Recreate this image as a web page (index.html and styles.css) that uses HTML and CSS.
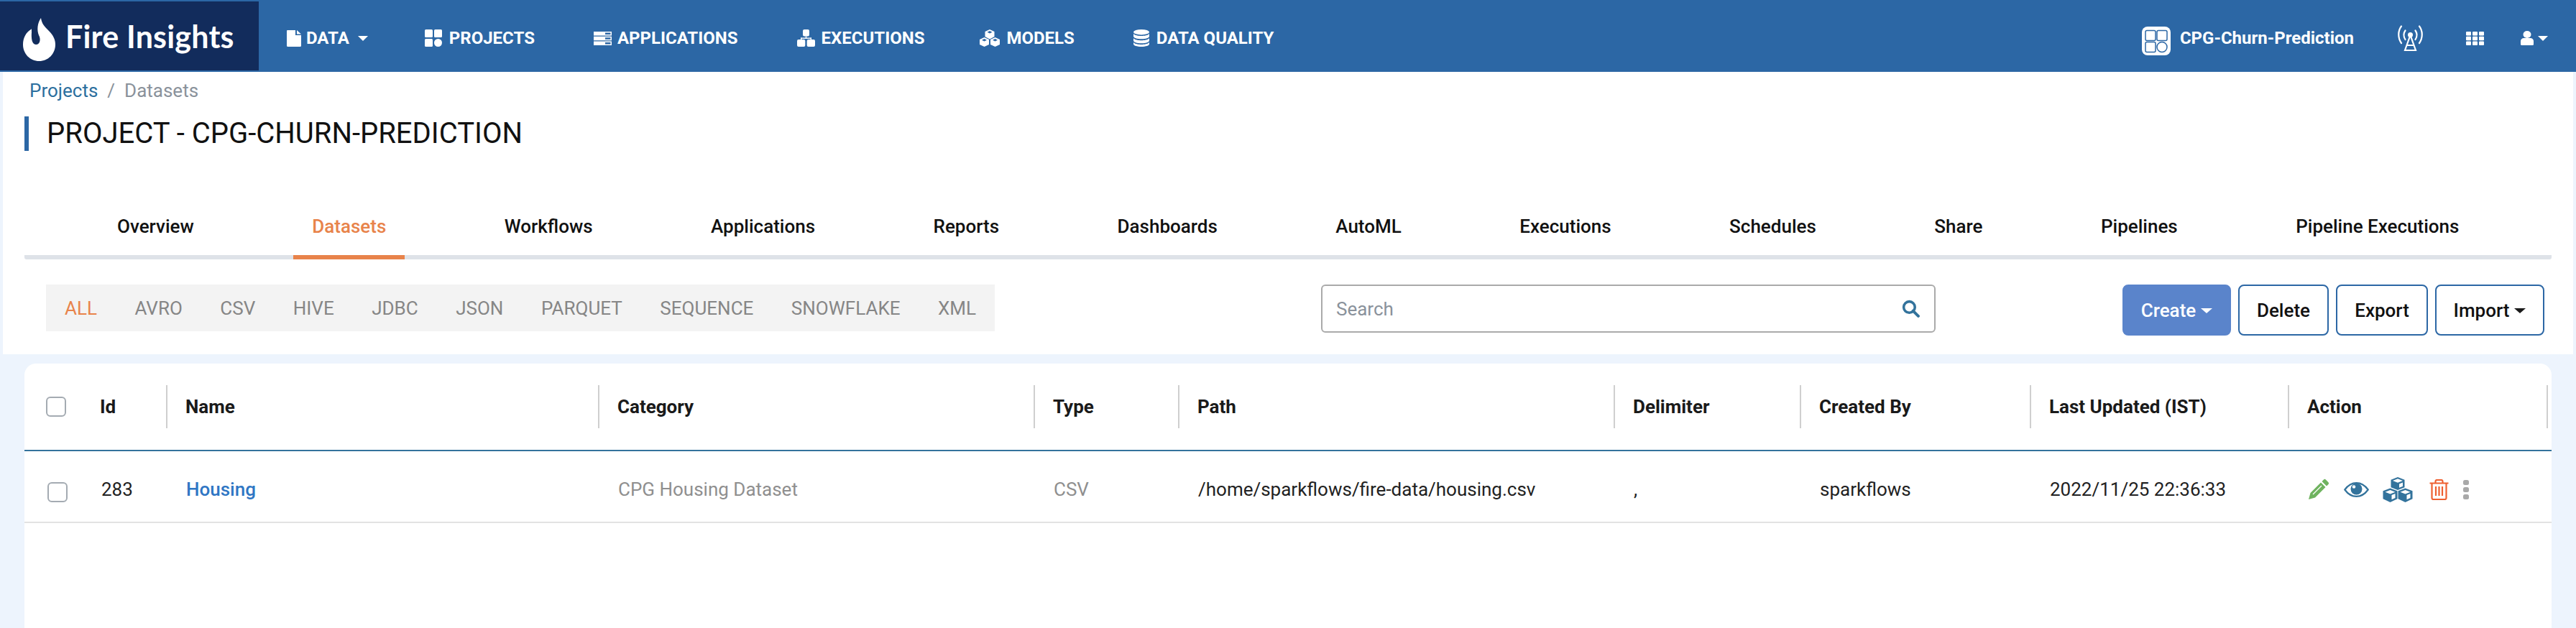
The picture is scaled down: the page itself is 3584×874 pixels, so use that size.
FILE: index.html
```html
<!DOCTYPE html>
<html lang="en">
<head>
<meta charset="utf-8">
<title>Fire Insights - Datasets</title>
<link rel="stylesheet" href="styles.css">
</head>
<body>
<header class="topbar">
  <a class="brand">
    <svg class="brand-flame" viewBox="0 0 45 60"><path fill="#fff" d="M25 0C26 8 30 12 36 18C42 24 45 30 45 37C45 50 35 60 22.500 60C10 60 0 50 0 37C0 28 4 20 11 16C12 14 12 16 12 20C11.500 27 12 37 18 37C24 37 25 29 22 24C19 17 20 7 25 0Z"/></svg>
    <span class="brand-text">Fire Insights</span>
  </a>
  <nav class="mainnav">
    <a class="navitem nav-data"><svg class="navicon ni-data" viewBox="0 0 20 23"><path fill="#fff" d="M1 0h11v7h8v14.500a1.500 1.500 0 0 1-1.500 1.500h-17A1.500 1.500 0 0 1 0 21.500V1a1 1 0 0 1 1-1zM14 0l6 5.500h-6z"/></svg>DATA<span class="caret caret-nav"></span></a>
    <a class="navitem nav-projects"><svg class="navicon ni-projects" viewBox="0 0 24 24"><g fill="#fff"><rect width="11" height="11" rx="1.500"/><rect x="13" width="11" height="11" rx="1.500"/><rect y="13" width="11" height="11" rx="1.500"/><circle cx="18.500" cy="18.500" r="5.500"/></g></svg>PROJECTS</a>
    <a class="navitem nav-apps"><svg class="navicon ni-apps" viewBox="0 0 25 19"><g fill="none" stroke="#fff" stroke-width="1.500"><rect x=".75" y=".75" width="23.500" height="4"/><rect x=".75" y="7.500" width="23.500" height="4"/><rect x=".75" y="14.250" width="23.500" height="4"/></g><g fill="#fff"><rect x="1" y="1" width="15" height="3.500"/><rect x="1" y="7.750" width="15" height="3.500"/><rect x="1" y="14.500" width="15" height="3.500"/></g></svg>APPLICATIONS</a>
    <a class="navitem nav-exec"><svg class="navicon ni-exec" viewBox="0 0 25 24"><g fill="#fff"><rect x="8" width="9" height="9.500" rx="2"/><rect x="11.800" y="9.500" width="1.400" height="3"/><rect x="5" y="11.500" width="15" height="1.400"/><rect x="5" y="11.500" width="1.400" height="3"/><rect x="18.600" y="11.500" width="1.400" height="3"/><rect y="14" width="11.300" height="10" rx="2"/><rect x="13.700" y="14" width="11.300" height="10" rx="2"/></g></svg>EXECUTIONS</a>
    <a class="navitem nav-models"><svg class="navicon ni-models" viewBox="0 0 30 24"><g fill="#fff"><path d="M15 0l6.500 3v7L15 13.500 8.500 10V3z"/><path d="M7.500 11l6.500 3v7l-6.500 3L1 21v-7z"/><path d="M22.500 11l6.500 3v7l-6.500 3L16 21v-7z"/></g><g fill="#2c67a5"><path d="M15 2l3.500 1.700L15 5.400l-3.500-1.700zM7.500 13l3.500 1.700-3.500 1.700L4 14.700zM22.500 13l3.500 1.700-3.500 1.700-3.500-1.700z"/></g></svg>MODELS</a>
    <a class="navitem nav-dq"><svg class="navicon ni-dq" viewBox="0 0 22 24"><g fill="#fff"><ellipse cx="11" cy="3.700" rx="11" ry="3.700"/><path d="M0 6c2 2.300 7 3 11 3s9-.7 11-3v3.500c0 2.200-5 3.800-11 3.800S0 11.700 0 9.500z"/><path d="M0 12.200c2 2.300 7 3 11 3s9-.7 11-3v3.300c0 2.200-5 3.800-11 3.800S0 17.700 0 15.500z"/><path d="M0 18c2 2.300 7 3 11 3s9-.7 11-3v2.300c0 2.200-5 3.700-11 3.700S0 22.500 0 20.300z"/></g></svg>DATA QUALITY</a>
  </nav>
  <div class="nav-right">
    <a class="project-chip">
      <svg class="chip-icon" viewBox="0 0 40 40"><rect width="40" height="40" rx="8" fill="#fff"/><g fill="none" stroke="#2c67a5" stroke-width="1.500"><rect x="5" y="5.500" width="14" height="14" rx="2"/><rect x="21" y="5.500" width="14" height="14" rx="2"/><rect x="5" y="21.500" width="14" height="14" rx="2"/><ellipse cx="28" cy="28.500" rx="7" ry="7"/></g></svg>
      <span>CPG-Churn-Prediction</span>
    </a>
    <svg class="antenna" viewBox="0 0 35 36"><g fill="none" stroke="#fff" stroke-width="2.200" stroke-linecap="round"><path d="M5 1.500C0 8 0 18 5 25M30 1.500C35 8 35 18 30 25"/><path d="M10.500 7.500C8 11 8 16 10.500 20M24.500 7.500C27 11 27 16 24.500 20"/><path d="M17.500 14L10 35h15zM13 28h9"/></g><circle cx="17.500" cy="13.500" r="3.500" fill="#fff"/></svg>
    <svg class="grid-icon" viewBox="0 0 25 19"><g fill="#fff"><rect width="7" height="5.500" rx="1"/><rect x="9" width="7" height="5.500" rx="1"/><rect x="18" width="7" height="5.500" rx="1"/><rect y="6.700" width="7" height="5.500" rx="1"/><rect x="9" y="6.700" width="7" height="5.500" rx="1"/><rect x="18" y="6.700" width="7" height="5.500" rx="1"/><rect y="13.500" width="7" height="5.500" rx="1"/><rect x="9" y="13.500" width="7" height="5.500" rx="1"/><rect x="18" y="13.500" width="7" height="5.500" rx="1"/></g></svg>
    <a class="user-menu"><svg class="user-icon" viewBox="0 0 18 20"><g fill="#fff"><ellipse cx="9" cy="5" rx="5.500" ry="5"/><path d="M0 14c0-2 2-4 4.500-4h9c2.500 0 4.500 2 4.500 4v4.500a1.500 1.500 0 0 1-1.500 1.500h-15A1.500 1.500 0 0 1 0 18.500z"/></g></svg><span class="caret caret-user"></span></a>
  </div>
</header>

<main class="page">
  <section class="panel">
    <div class="breadcrumb"><a class="crumb-link">Projects</a><span class="crumb-sep">/</span><span class="crumb-cur">Datasets</span></div>
    <h1 class="page-title">PROJECT - CPG-CHURN-PREDICTION</h1>
    <div class="tabs">
      <a class="tab">Overview</a>
      <a class="tab active">Datasets</a>
      <a class="tab">Workflows</a>
      <a class="tab">Applications</a>
      <a class="tab">Reports</a>
      <a class="tab">Dashboards</a>
      <a class="tab">AutoML</a>
      <a class="tab">Executions</a>
      <a class="tab">Schedules</a>
      <a class="tab">Share</a>
      <a class="tab">Pipelines</a>
      <a class="tab">Pipeline Executions</a>
    </div>
    <div class="toolbar">
      <div class="filters">
        <a class="filter active">ALL</a>
        <a class="filter">AVRO</a>
        <a class="filter">CSV</a>
        <a class="filter">HIVE</a>
        <a class="filter">JDBC</a>
        <a class="filter">JSON</a>
        <a class="filter">PARQUET</a>
        <a class="filter">SEQUENCE</a>
        <a class="filter">SNOWFLAKE</a>
        <a class="filter">XML</a>
      </div>
      <div class="search">
        <span class="search-ph">Search</span>
        <svg class="search-icon" viewBox="0 0 24 24"><circle cx="10" cy="10" r="7.500" fill="none" stroke="#33739c" stroke-width="3.400"/><path d="M15 15l7 7" stroke="#33739c" stroke-width="3.800" stroke-linecap="round"/></svg>
      </div>
      <div class="actions">
        <button class="btn btn-primary">Create<span class="caret"></span></button>
        <button class="btn btn-delete">Delete</button>
        <button class="btn btn-export">Export</button>
        <button class="btn btn-import">Import<span class="caret caret-dark"></span></button>
      </div>
    </div>
  </section>

  <section class="card">
    <div class="row row-head">
      <div class="cell c-check"><span class="checkbox"></span></div>
      <div class="cell c-id">Id</div>
      <div class="cell c-name">Name</div>
      <div class="cell c-cat">Category</div>
      <div class="cell c-type">Type</div>
      <div class="cell c-path">Path</div>
      <div class="cell c-delim">Delimiter</div>
      <div class="cell c-by">Created By</div>
      <div class="cell c-upd">Last Updated (IST)</div>
      <div class="cell c-act">Action</div>
    </div>
    <div class="row row-body">
      <div class="cell c-check"><span class="checkbox"></span></div>
      <div class="cell c-id">283</div>
      <div class="cell c-name"><a class="link">Housing</a></div>
      <div class="cell c-cat muted">CPG Housing Dataset</div>
      <div class="cell c-type muted">CSV</div>
      <div class="cell c-path">/home/sparkflows/fire-data/housing.csv</div>
      <div class="cell c-delim">,</div>
      <div class="cell c-by">sparkflows</div>
      <div class="cell c-upd">2022/11/25 22:36:33</div>
      <div class="cell c-act icons">
        <svg class="ic ic-pencil" viewBox="0 0 30 30"><path fill="#6fb35f" d="M22 1.500a2 2 0 0 1 2.800 0l3.700 3.700a2 2 0 0 1 0 2.800L26 10.500 19.500 4zM18 5.500L24.500 12 10 26.500 1 29l2.500-9z"/><path stroke="#fff" stroke-width="1.200" d="M19 10L7 22"/></svg>
        <svg class="ic ic-eye" viewBox="0 0 35 21"><path fill="none" stroke="#33739c" stroke-width="2.200" d="M1.300 10.500C6 4 11 1.100 17.500 1.100S29 4 33.700 10.500C29 17 24 19.900 17.500 19.900S6 17 1.300 10.500z"/><circle cx="17.500" cy="9.500" r="8" fill="#33739c"/><circle cx="14" cy="6.500" r="2.300" fill="#fff"/></svg>
        <svg class="ic ic-cubes" viewBox="0 0 42 35"><g fill="#33739c"><path d="M21 0l9.500 3.700v10.600L21 18l-9.500-3.700V3.700z"/><path d="M10.500 15.500l10 3.700v11l-10 4.800-10-4.800v-11z"/><path d="M31.500 15.500l10 3.700v11l-10 4.800-10-4.800v-11z"/></g><g fill="#fff"><path d="M21 2.200l7 2.800-7 2.800-7-2.800z"/><path d="M10.500 18l7 2.800-7 2.800-7-2.800z"/><path d="M31.500 18l7 2.800-7 2.800-7-2.800z"/><path d="M23 9.500l5-2v5.200l-5 2z"/><path d="M12.500 25l5-2v6l-5 2.300z"/><path d="M33.500 25l5-2v6l-5 2.300z"/></g></svg>
        <svg class="ic ic-trash" viewBox="0 0 27 29"><g fill="none" stroke="#ee6031" stroke-width="2.200"><path d="M.5 5.500h26M8.500 5.500V3a2 2 0 0 1 2-2h6a2 2 0 0 1 2 2v2.500"/><path d="M3.500 5.500v20.500a2 2 0 0 0 2 2h16a2 2 0 0 0 2-2V5.500"/><path d="M9 10v13M13.500 10v13M18 10v13"/></g></svg>
        <svg class="ic ic-dots" viewBox="0 0 8 27"><g fill="#a9a9a9"><rect width="8" height="7" rx="2.500"/><rect y="10" width="8" height="7" rx="2.500"/><rect y="20" width="8" height="7" rx="2.500"/></g></svg>
      </div>
    </div>
  </section>
</main>
</body>
</html>
```
FILE: styles.css
```css
* { box-sizing: border-box; }
html, body { margin: 0; padding: 0; }
body {
  width: 3584px;
  height: 874px;
  overflow: hidden;
  background: #edf4fd;
  font-family: Roboto, "Liberation Sans", sans-serif;
  color: #1a1a1a;
}
a { color: inherit; text-decoration: none; }

/* Top bar */
.topbar {
  height: 100px;
  background: #2c67a5;
  display: flex;
  align-items: center;
}
.brand {
  width: 360px;
  height: 96px;
  background: #122c5c;
  display: flex;
  align-items: center;
  padding-left: 32px;
  gap: 14px;
  flex: none;
}
.brand-flame { width: 45px; height: 60px; flex: none; margin-top: 10px; }
.brand-text {
  font-family: Lato, "Open Sans", sans-serif;
  font-weight: 700;
  font-size: 43px;
  letter-spacing: 0.2px;
  color: #fff;
}
.mainnav {
  display: flex;
  align-items: center;
  padding-top: 6px;
  color: #fff;
  font-weight: 700;
  font-size: 24px;
}
.navitem { display: flex; align-items: center; flex: none; }
.navicon { flex: none; }
.ni-data { width: 20px; height: 23px; margin-right: 7px; }
.ni-projects { width: 24px; height: 24px; margin-right: 10px; }
.ni-apps { width: 25px; height: 19px; margin-right: 8px; }
.ni-exec { width: 25px; height: 24px; margin-right: 9px; }
.ni-models { width: 30px; height: 24px; margin-right: 8px; }
.ni-dq { width: 22px; height: 24px; margin-right: 10px; }
.nav-data { margin-left: 39px; }
.nav-projects { margin-left: 79px; }
.nav-apps { margin-left: 82px; }
.nav-exec { margin-left: 82px; }
.nav-models { margin-left: 76px; }
.nav-dq { margin-left: 82px; }
.caret {
  display: inline-block;
  margin-left: 7px;
  border-left: 8px solid transparent;
  border-right: 8px solid transparent;
  border-top: 7px solid #fff;
  vertical-align: 5px;
}
.caret-nav { margin-left: 12px; border-left-width: 7px; border-right-width: 7px; }
.caret-user { margin-left: 6px; border-left-width: 7px; border-right-width: 7px; }
.caret-dark { border-top-color: #1a1a1a; }
.nav-right {
  margin-left: auto;
  display: flex;
  align-items: center;
  padding-top: 6px;
  color: #fff;
  padding-right: 39px;
}
.project-chip { display: flex; align-items: center; gap: 13px; font-weight: 700; font-size: 24px; }
.chip-icon { width: 40px; height: 40px; flex: none; margin-top: 8px; }
.antenna { width: 35px; height: 36px; margin-left: 61px; }
.grid-icon { width: 25px; height: 19px; margin-left: 60px; }
.user-menu { display: flex; align-items: center; margin-left: 51px; }
.user-icon { width: 18px; height: 20px; }

/* Panel */
.page { padding: 0 4px; }
.panel { background: #fff; height: 393px; padding: 0 30px; }
.breadcrumb { padding: 10px 0 0 7px; font-size: 26px; line-height: 32px; display: flex; color: #8a929b; }
.crumb-link { color: #2c6f9e; }
.crumb-sep { margin: 0 13px; }
.page-title {
  margin: 20px 0 0;
  height: 48px;
  border-left: 6px solid #2c67a5;
  padding-left: 25px;
  font-weight: 400;
  font-size: 40px;
  line-height: 48px;
  color: #111;
}
.tabs {
  margin-top: 47px;
  height: 104px;
  padding-left: 103px;
  border-bottom: 6px solid #dee2e8;
  border-radius: 3px;
  display: flex;
}
.tab {
  padding: 0 26px;
  margin-right: 112.5px;
  font-weight: 500;
  font-size: 26px;
  line-height: 116px;
  height: 104px;
  color: #111;
  flex: none;
}
.tab.active { color: #e8834a; border-bottom: 6px solid #e8834a; }
.toolbar { margin-top: 35px; display: flex; align-items: flex-start; }
.filters {
  width: 1320px;
  height: 65px;
  margin-left: 30px;
  background: #f3f3f3;
  display: flex;
  align-items: center;
  padding-left: 26px;
  gap: 52.5px;
  font-size: 26px;
  color: #868686;
  flex: none;
}
.filter.active { color: #e8834a; }
.search {
  width: 855px;
  height: 67px;
  margin-left: 454px;
  border: 2px solid #aaa;
  border-radius: 6px;
  display: flex;
  align-items: center;
  justify-content: space-between;
  padding: 0 20px 0 19px;
  font-size: 26px;
  color: #8a929b;
  flex: none;
}
.search-icon { width: 25px; height: 25px; }
.actions { margin-left: 260px; display: flex; gap: 10px; flex: none; }
.btn {
  height: 71px;
  padding: 0;
  border: 2px solid #2c67a5;
  border-radius: 8px;
  background: #fff;
  color: #111;
  font-family: inherit;
  font-weight: 500;
  font-size: 26px;
}
.btn-primary { width: 151px; background: #5a84cb; border-color: #5a84cb; color: #fff; }
.btn-delete { width: 126px; }
.btn-export { width: 128px; }
.btn-import { width: 152px; }

/* Table */
.card {
  margin: 13px 30px 0;
  width: 3516px;
  height: 368px;
  background: #fff;
  border-radius: 16px 16px 0 0;
}
.row {
  display: grid;
  grid-template-columns: 105px 92px 601px 606px 201px 606px 259px 320px 359px 362px;
  font-size: 26px;
}
.row-head {
  height: 122px;
  padding-top: 30px;
  border-bottom: 2px solid #33739c;
  font-weight: 700;
  color: #1a1a1a;
}
.row-body {
  height: 100px;
  padding-top: 8px;
  border-bottom: 2px solid #e3e3e3;
  align-items: center;
  color: #222;
}
.cell { display: flex; align-items: center; }
.row-head .cell { height: 60px; border-left: 2px solid #cfcfcf; padding-left: 25px; }
.row-body .cell { padding-left: 28px; }
.row-head .c-check { border-left: 0; padding-left: 30px; }
.row-body .c-check { padding-left: 32px; }
.row-head .c-id { border-left: 0; padding-left: 0; }
.row-body .c-id { padding-left: 2px; }
.row-head .c-act { border-right: 2px solid #cfcfcf; }
.checkbox {
  width: 28px;
  height: 28px;
  background: #fff;
  border: 2px solid #a4abb2;
  border-radius: 6px;
  display: block;
}
.row-body .checkbox { margin-top: 8px; }
.muted { color: #8f8f8f; }
.link { color: #2f76c4; font-weight: 500; }
.ic { flex: none; display: block; }
.ic-pencil { width: 30px; height: 30px; }
.ic-eye { width: 35px; height: 21px; margin-left: 20px; }
.ic-cubes { width: 42px; height: 35px; margin-left: 19px; }
.ic-trash { width: 27px; height: 29px; margin-left: 23px; }
.ic-dots { width: 8px; height: 27px; margin-left: 20px; }
```
